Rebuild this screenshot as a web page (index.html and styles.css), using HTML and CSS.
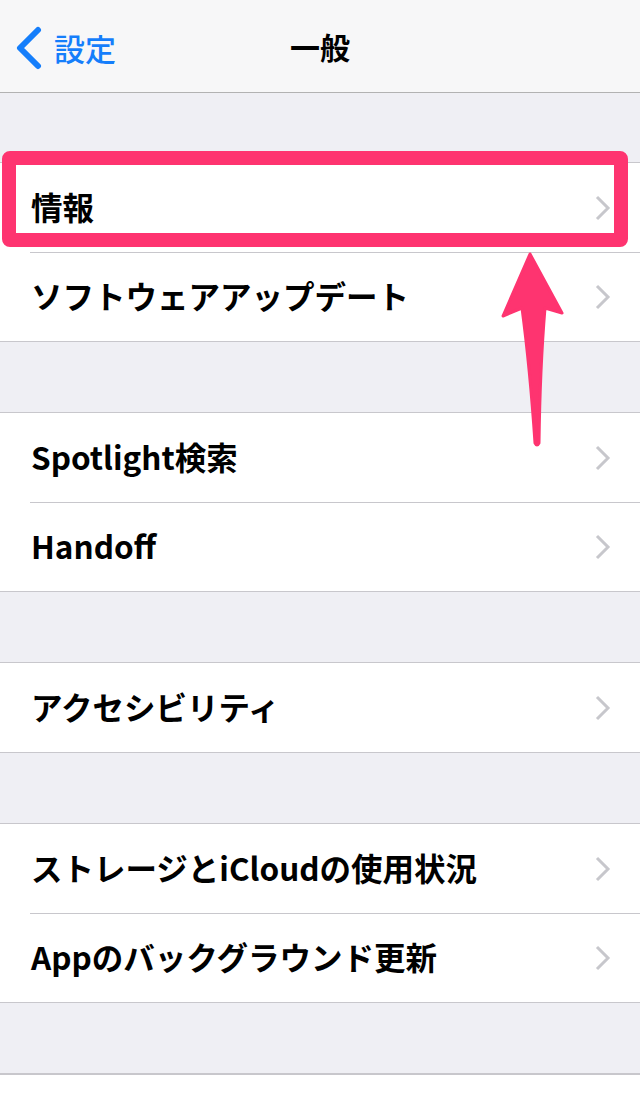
FILE: index.html
```html
<!DOCTYPE html>
<html lang="ja">
<head>
    <meta charset="utf-8">
    <title>一般</title>
    <link rel="stylesheet" href="styles.css">
</head>
<body>

<div class="navbar">
    <a class="back" href="#">
        <svg class="back_icon" width="30" height="44" viewBox="0 0 30 44">
            <polyline points="24,4 6,22 24,40" fill="none" stroke="#157efb" stroke-width="6" stroke-linecap="round" stroke-linejoin="round"/>
        </svg>
        <span>設定</span>
    </a>
    <h1 class="title">一般</h1>
</div>

<div class="content">
    <ul class="group">
        <li class="row"><span>情報</span><svg class="chevron" width="16" height="26" viewBox="0 0 16 26"><polyline points="2,2 13,13 2,24"/></svg></li>
        <li class="row"><span>ソフトウェアアップデート</span><svg class="chevron" width="16" height="26" viewBox="0 0 16 26"><polyline points="2,2 13,13 2,24"/></svg></li>
    </ul>

    <ul class="group">
        <li class="row"><span>Spotlight検索</span><svg class="chevron" width="16" height="26" viewBox="0 0 16 26"><polyline points="2,2 13,13 2,24"/></svg></li>
        <li class="row"><span>Handoff</span><svg class="chevron" width="16" height="26" viewBox="0 0 16 26"><polyline points="2,2 13,13 2,24"/></svg></li>
    </ul>

    <ul class="group">
        <li class="row"><span>アクセシビリティ</span><svg class="chevron" width="16" height="26" viewBox="0 0 16 26"><polyline points="2,2 13,13 2,24"/></svg></li>
    </ul>

    <ul class="group">
        <li class="row"><span>ストレージとiCloudの使用状況</span><svg class="chevron" width="16" height="26" viewBox="0 0 16 26"><polyline points="2,2 13,13 2,24"/></svg></li>
        <li class="row"><span>Appのバックグラウンド更新</span><svg class="chevron" width="16" height="26" viewBox="0 0 16 26"><polyline points="2,2 13,13 2,24"/></svg></li>
    </ul>

    <div class="group_tail"></div>
</div>

<!-- annotation overlay -->
<div class="mark_box"></div>
<svg class="mark_arrow" width="75" height="205" viewBox="0 0 75 205">
    <path d="M35 6 L67 65 L50 60 Q45 120 44 195 Q42 199 40 195 Q35 120 27 60 L8 68 Z"
          fill="#fe3470" stroke="#fe3470" stroke-width="3" stroke-linejoin="round"/>
</svg>

</body>
</html>
```

FILE: styles.css
```css
body, html {
    margin: 0;
    padding: 0;
    font-family: "Noto Sans CJK JP", "Noto Sans", sans-serif;
    background-color: #efeff4;
}

body {
    position: relative;
    min-height: 1100px;
}

.navbar {
    height: 92px;
    background-color: #f7f7f8;
    border-bottom: 1px solid #b2b2b2;
    display: flex;
    align-items: center;
    justify-content: center;
    position: relative;
}

.back {
    position: absolute;
    left: 14px;
    top: 25px;
    display: flex;
    align-items: center;
    gap: 10px;
    color: #157efb;
    text-decoration: none;
    font-size: 31px;
    font-weight: 500;
}

.title {
    margin: 0;
    font-size: 30px;
    font-weight: 700;
    color: #000;
}

.content {
    padding-top: 69px;
}

.group {
    list-style: none;
    margin: 0 0 70px 0;
    padding: 0;
    background-color: #fff;
    border-top: 1px solid #c8c7cc;
    border-bottom: 1px solid #c8c7cc;
}

.row {
    box-sizing: border-box;
    height: 89px;
    margin-left: 30px;
    padding: 0 29px 4px 1px;
    display: flex;
    align-items: center;
    justify-content: space-between;
    font-size: 31.5px;
    font-weight: 700;
    color: #000;
}

.row + .row {
    border-top: 1px solid #c8c7cc;
}

.chevron {
    margin-top: 4px;
}

.chevron polyline {
    fill: none;
    stroke: #c7c7cc;
    stroke-width: 3;
}

.group_tail {
    height: 40px;
    background-color: #fff;
    border-top: 2px solid #c8c7cc;
}

.mark_box {
    position: absolute;
    left: 2px;
    top: 151px;
    width: 598px;
    height: 68px;
    border: 14px solid #fe3470;
    border-radius: 8px;
}

.mark_arrow {
    position: absolute;
    left: 495px;
    top: 248px;
}
```
